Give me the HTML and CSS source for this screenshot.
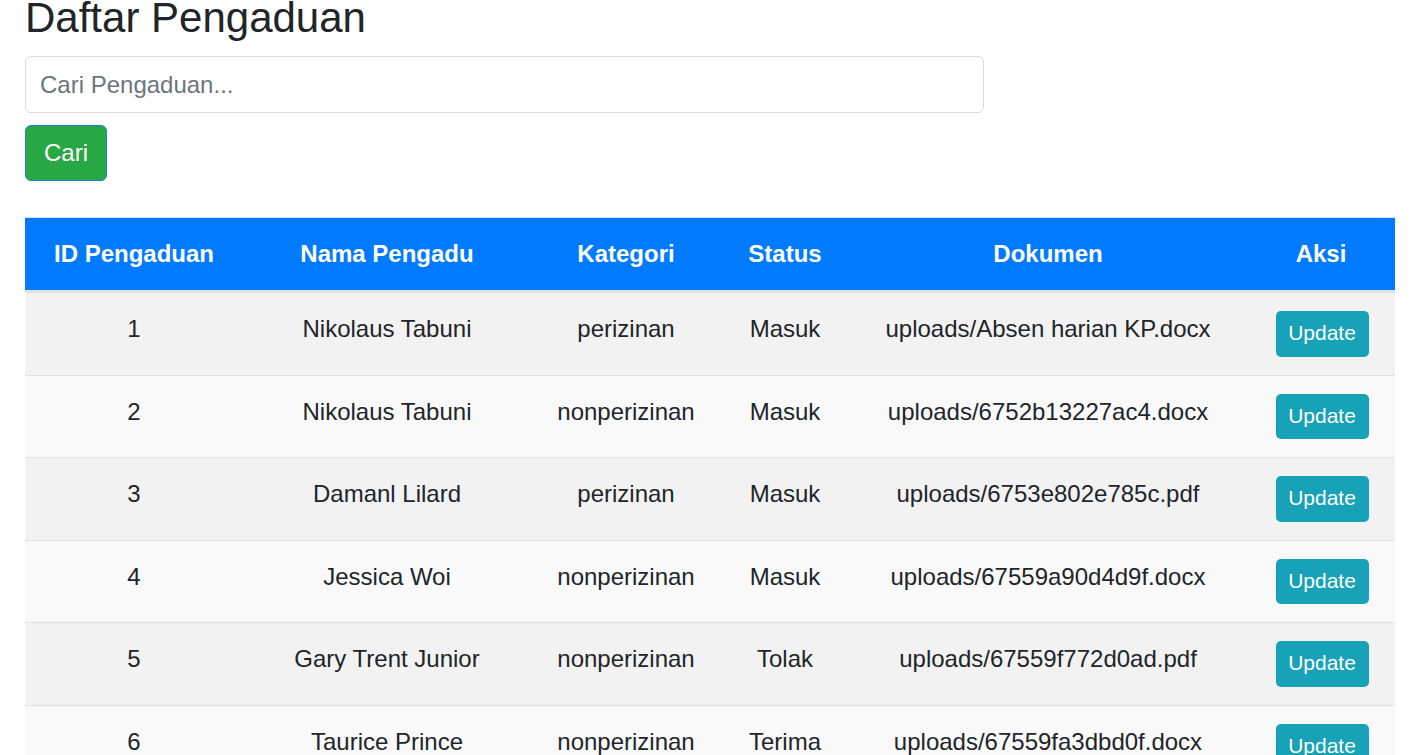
FILE: index.html
```html
<!DOCTYPE html>
<html lang="id">
<head>
<meta charset="utf-8">
<title>Daftar Pengaduan</title>
<link rel="stylesheet" href="styles.css">
</head>
<body>
<main class="page">
  <h1 class="title">Daftar Pengaduan</h1>
  <form class="search">
    <input class="search-input" type="text" placeholder="Cari Pengaduan...">
    <button class="btn-cari" type="button">Cari</button>
  </form>
  <table class="data">
    <colgroup>
      <col class="c1"><col class="c2"><col class="c3"><col class="c4"><col class="c5"><col class="c6">
    </colgroup>
    <thead>
      <tr>
        <th>ID Pengaduan</th>
        <th>Nama Pengadu</th>
        <th>Kategori</th>
        <th>Status</th>
        <th>Dokumen</th>
        <th>Aksi</th>
      </tr>
    </thead>
    <tbody>
      <tr><td>1</td><td>Nikolaus Tabuni</td><td>perizinan</td><td>Masuk</td><td>uploads/Absen harian KP.docx</td><td><button class="btn-update" type="button">Update</button></td></tr>
      <tr><td>2</td><td>Nikolaus Tabuni</td><td>nonperizinan</td><td>Masuk</td><td>uploads/6752b13227ac4.docx</td><td><button class="btn-update" type="button">Update</button></td></tr>
      <tr><td>3</td><td>Damanl Lilard</td><td>perizinan</td><td>Masuk</td><td>uploads/6753e802e785c.pdf</td><td><button class="btn-update" type="button">Update</button></td></tr>
      <tr><td>4</td><td>Jessica Woi</td><td>nonperizinan</td><td>Masuk</td><td>uploads/67559a90d4d9f.docx</td><td><button class="btn-update" type="button">Update</button></td></tr>
      <tr><td>5</td><td>Gary Trent Junior</td><td>nonperizinan</td><td>Tolak</td><td>uploads/67559f772d0ad.pdf</td><td><button class="btn-update" type="button">Update</button></td></tr>
      <tr><td>6</td><td>Taurice Prince</td><td>nonperizinan</td><td>Terima</td><td>uploads/67559fa3dbd0f.docx</td><td><button class="btn-update" type="button">Update</button></td></tr>
    </tbody>
  </table>
</main>
</body>
</html>
```

FILE: styles.css
```css
html, body {
  margin: 0;
  padding: 0;
  background: #ffffff;
}

body {
  font-family: "Liberation Sans", Arial, sans-serif;
  font-size: 24px;
  color: #212529;
}

.page {
  padding: 0 32px 40px 25px;
}

.title {
  margin: 0 0 20px;
  font-size: 42px;
  font-weight: 400;
  line-height: 36px;
  color: #212529;
}

.search {
  display: flex;
  flex-direction: column;
  align-items: flex-start;
  gap: 12px;
  margin: 0 0 36px;
}

.search-input {
  box-sizing: border-box;
  width: 70%;
  height: 57px;
  padding: 0 14px;
  border: 1px solid #dadada;
  border-radius: 6px;
  font-family: inherit;
  font-size: 24px;
  color: #495057;
  background: #fff;
  outline: none;
}

.search-input::placeholder {
  color: #6c757d;
  opacity: 1;
}

.btn-cari {
  box-sizing: border-box;
  height: 56px;
  width: 82px;
  padding: 0;
  border: 1px solid #1f7fd8;
  border-radius: 6px;
  background: #28a745;
  color: #fff;
  font-family: inherit;
  font-size: 24px;
  line-height: 36px;
  cursor: pointer;
}

.data {
  width: 1370px;
  table-layout: fixed;
  border-collapse: collapse;
  text-align: center;
}

.c1 { width: 218px; }
.c2 { width: 288px; }
.c3 { width: 190px; }
.c4 { width: 128px; }
.c5 { width: 398px; }
.c6 { width: 148px; }

.data th {
  background: #007bff;
  color: #fff;
  font-weight: 700;
  padding: 18px 0;
  line-height: 36px;
  border-top: 1px solid #dee2e6;
  border-bottom: 3px solid #dee2e6;
  vertical-align: bottom;
}

.data td {
  padding: 18px 0 18px;
  line-height: 36px;
  border-top: 1px solid #dee2e6;
  vertical-align: top;
  white-space: nowrap;
}

.data td:last-child {
  padding-left: 2px;
}

.data tbody tr:nth-child(odd) td {
  background: #f2f2f2;
}

.data tbody tr:nth-child(even) td {
  background: #f9f9f9;
}

.btn-update {
  box-sizing: border-box;
  display: inline-flex;
  align-items: center;
  justify-content: center;
  width: 93px;
  height: 45.5px;
  padding: 0 0 1px;
  border: 0;
  border-radius: 5px;
  background: #17a2b8;
  color: #fff;
  font-family: inherit;
  font-size: 21px;
  vertical-align: top;
  cursor: pointer;
}
```
